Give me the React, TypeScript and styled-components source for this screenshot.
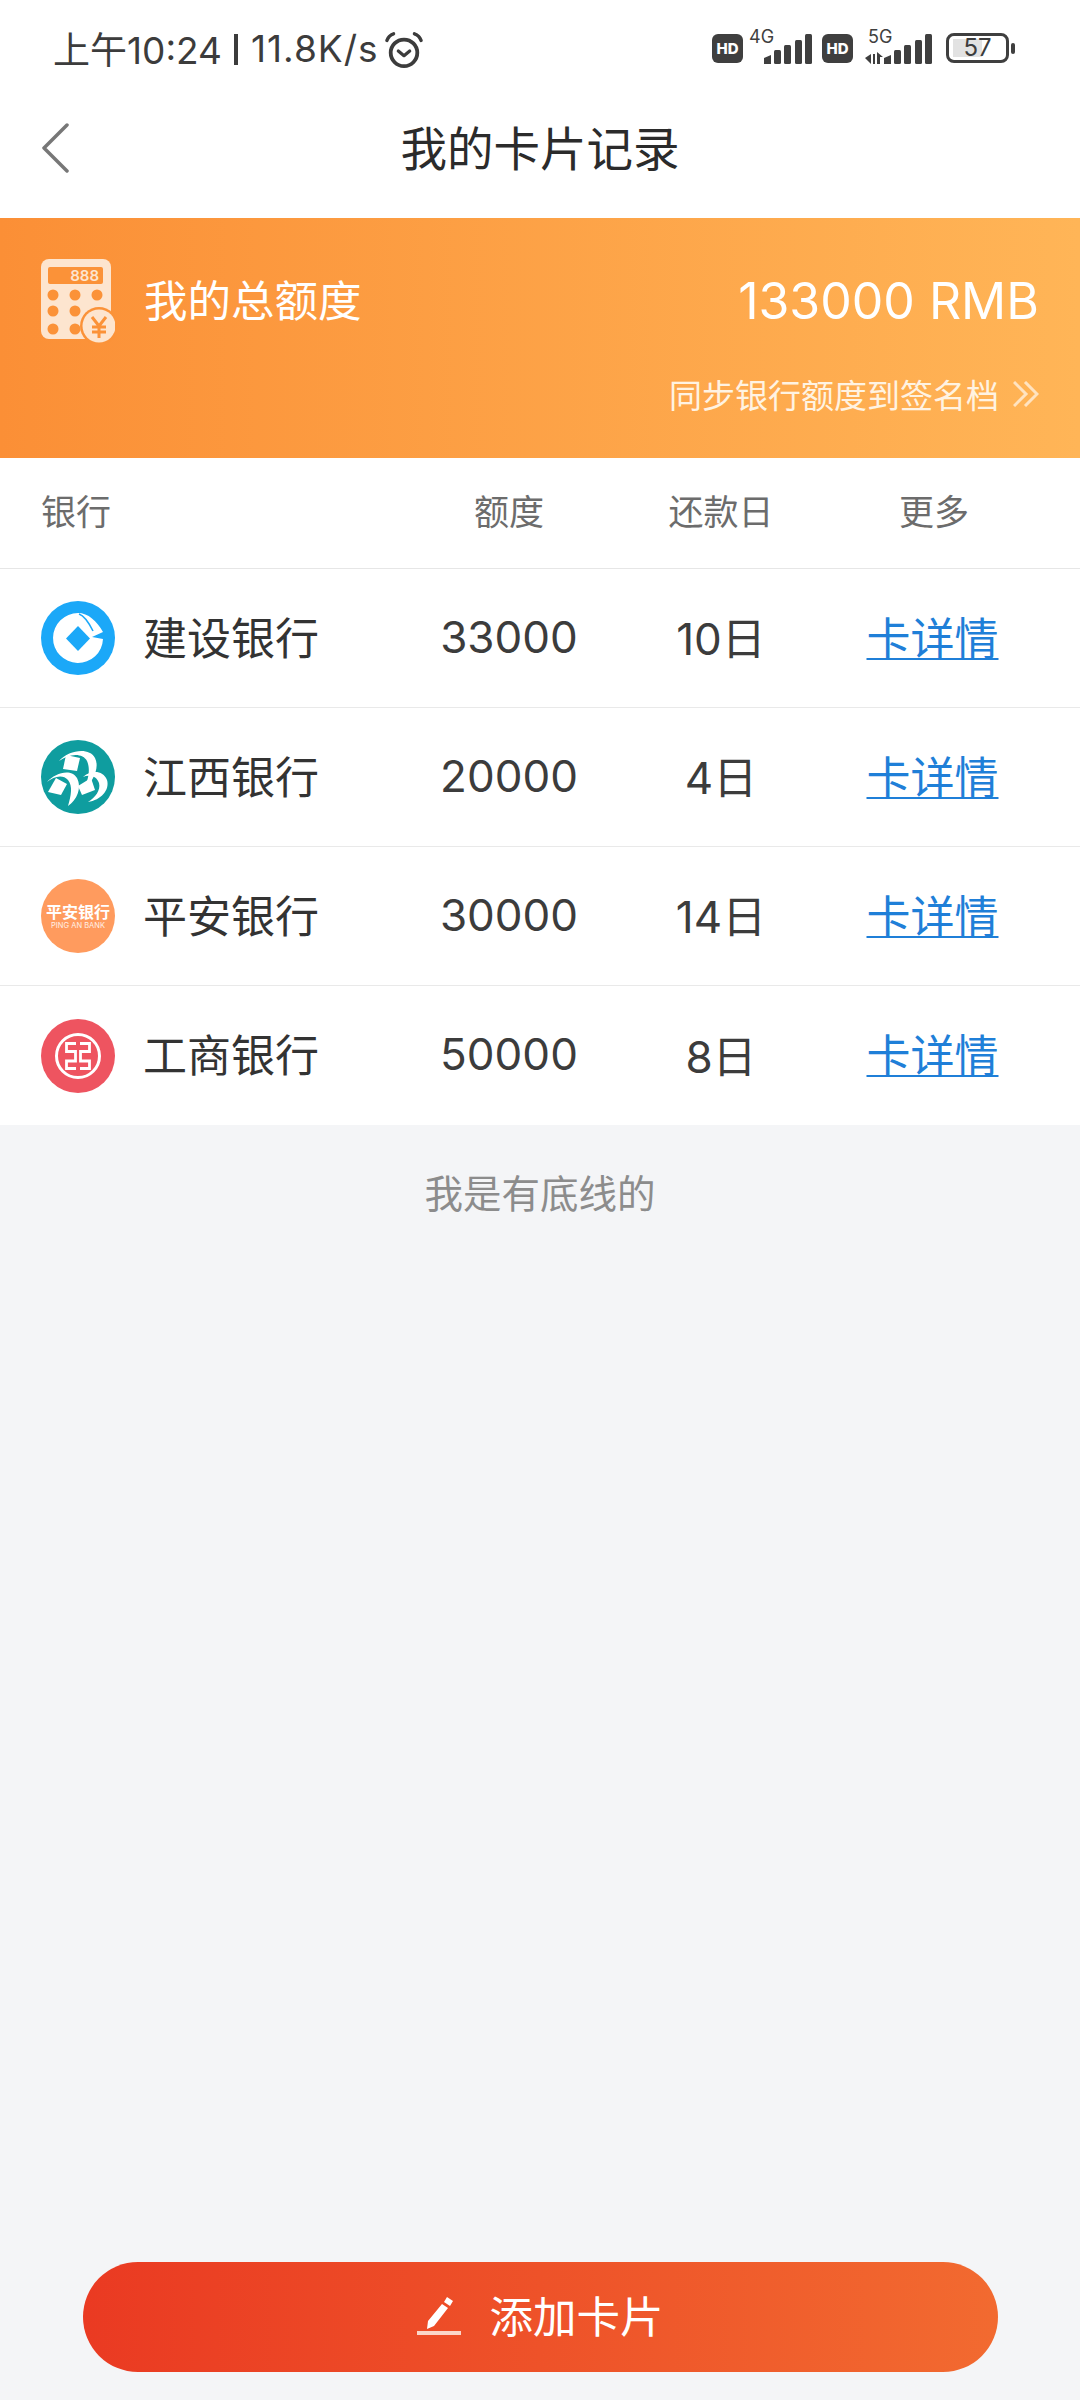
import React from 'react'
import styled, { createGlobalStyle } from 'styled-components'

const GlobalStyle = createGlobalStyle`
  html, body { margin: 0; padding: 0; background: #f4f5f7; }
  * { box-sizing: border-box; }
  body { font-family: "Inter", "Noto Sans CJK SC", sans-serif; }
`

const banks = [
  { name: '建设银行', limit: '33000', day: '10日', logo: 'ccb' },
  { name: '江西银行', limit: '20000', day: '4日', logo: 'jx' },
  { name: '平安银行', limit: '30000', day: '14日', logo: 'pa' },
  { name: '工商银行', limit: '50000', day: '8日', logo: 'icbc' },
]

const Page = styled.div`
  width: 1080px;
  height: 2400px;
  display: flex;
  flex-direction: column;
  background: #f4f5f7;
  overflow: hidden;
`

const StatusBar = styled.div`
  height: 78px;
  padding: 18px 71px 0 53px;
  background: #fff;
  display: flex;
  justify-content: space-between;
  align-items: flex-start;
`

const StatusLeft = styled.div`
  display: flex;
  align-items: center;
  height: 60px;
  font-size: 37px;
  color: #3c3c3c;
  white-space: nowrap;
`

const StatusDivider = styled.span`
  width: 4px;
  height: 31px;
  margin: 2px 13px 0 12px;
  background: #3c3c3c;
`

const NetSpeed = styled.span`
  letter-spacing: 1px;
`

const StatusRight = styled.div`
  display: flex;
  align-items: center;
  height: 60px;
`

const HdBadge = styled.div<{ $gap?: number }>`
  width: 31px;
  height: 29px;
  margin-left: ${p => p.$gap ?? 0}px;
  border-radius: 6px;
  background: #3f3f3f;
  color: #fff;
  font-size: 15px;
  font-weight: 800;
  line-height: 29px;
  text-align: center;
`

const SignalBox = styled.div<{ $width: number; $gap: number }>`
  position: relative;
  width: ${p => p.$width}px;
  height: 36px;
  margin-left: ${p => p.$gap}px;

  svg {
    display: block;
  }
`

const NetLabel = styled.span<{ $left: number }>`
  position: absolute;
  left: ${p => p.$left}px;
  top: -3px;
  font-size: 18px;
  line-height: 20px;
  color: #3f3f3f;
`

const Battery = styled.div`
  position: relative;
  width: 63px;
  height: 30px;
  margin-left: 13px;
  border: 3px solid #3f3f3f;
  border-radius: 8px;
  font-size: 24px;
  line-height: 24px;
  text-align: center;
  color: #3c3c3c;

  &::before {
    content: '';
    position: absolute;
    left: 4px;
    top: 3px;
    bottom: 3px;
    width: 29px;
    background: #e2e2e2;
    z-index: 0;
  }

  &::after {
    content: '';
    position: absolute;
    right: -9px;
    top: 7px;
    width: 4px;
    height: 11px;
    border-radius: 2px;
    background: #3f3f3f;
  }

  span {
    position: relative;
    z-index: 1;
  }
`

const Nav = styled.div`
  height: 140px;
  padding: 0 41px;
  background: #fff;
  display: grid;
  grid-template-columns: 1fr auto 1fr;
  align-items: center;
`

const Title = styled.h1`
  margin: 0 0 6px;
  font-size: 46.5px;
  font-weight: 400;
  color: #2b2b2b;
`

const Banner = styled.div`
  height: 240px;
  padding: 41px 41px 0;
  color: #fff;
  background: linear-gradient(90deg, #fb8f36 0%, #ffb557 100%);
`

const BannerTop = styled.div`
  height: 84px;
  display: flex;
  align-items: center;
`

const BannerName = styled.div`
  margin: 0 0 5px 29px;
  font-size: 43.5px;
  flex: 1;
`

const BannerAmount = styled.div`
  font-size: 50px;
  font-weight: 400;
`

const SyncRow = styled.div`
  margin-top: 29px;
  height: 44px;
  display: flex;
  justify-content: flex-end;
  align-items: center;
  gap: 14px;
  font-size: 33px;
  color: #fff3e2;
`

const Table = styled.div`
  background: #fff;
`

const TableRow = styled.div<{ $head?: boolean }>`
  display: grid;
  grid-template-columns: 364px 208px 216px 1fr;
  align-items: center;
  padding: 0 41px ${p => (p.$head ? 8 : 0)}px;
  height: ${p => (p.$head ? 111 : 139)}px;
  border-bottom: 1px solid ${p => (p.$head ? '#e6e6e6' : '#e9e9e9')};
  font-size: ${p => (p.$head ? 35 : 44)}px;
  color: ${p => (p.$head ? '#6c6c6c' : '#333')};

  &:last-child {
    border-bottom: 0;
  }
`

const BankCell = styled.div`
  display: flex;
  align-items: center;
  gap: 28px;
`

const BankName = styled.span`
  margin-bottom: 5px;
`

const Cell = styled.div`
  text-align: center;
`

const LimitCell = styled(Cell)`
  margin-bottom: 3px;
  color: #3c3c3c;
`

const DayCell = styled(Cell)`
  margin-bottom: 4px;
  color: #3c3c3c;
`

const DetailLink = styled.a`
  display: block;
  margin: 0 3px 5px 0;
  text-align: center;
  color: #1f7fd8;
  text-decoration: underline;
  text-decoration-thickness: 2px;
  text-underline-offset: 3px;
`

const Logo = styled.div<{ $bg: string }>`
  width: 74px;
  height: 74px;
  border-radius: 50%;
  flex: none;
  background: ${p => p.$bg};
  display: flex;
  flex-direction: column;
  align-items: center;
  justify-content: center;
  color: #fff;
  overflow: hidden;

  svg {
    display: block;
  }
`

const LogoName = styled.span`
  font-size: 16px;
  line-height: 18px;
  font-weight: 700;
  white-space: nowrap;
`

const LogoSub = styled.span`
  font-size: 7.5px;
  line-height: 9px;
  white-space: nowrap;
  opacity: 0.85;
`

const BottomNote = styled.div`
  padding-top: 46px;
  text-align: center;
  font-size: 38.5px;
  line-height: 46px;
  color: #8c8c8c;
`

const Spacer = styled.div`
  flex: 1;
`

const AddButton = styled.button`
  align-self: center;
  width: 915px;
  height: 110px;
  margin: 0 0 28px;
  padding: 0 0 5px;
  border: 0;
  border-radius: 55px;
  background: linear-gradient(90deg, #ea3a22 0%, #f26a30 100%);
  color: #fff;
  font-family: inherit;
  font-size: 43.5px;
  display: flex;
  align-items: center;
  justify-content: center;
  gap: 29px;
`

function AlarmIcon() {
  return (
    <svg width="40" height="38" viewBox="0 0 42 40" fill="none" stroke="#3c3c3c" strokeLinecap="round" style={{ marginLeft: 5, marginTop: 3 }}>
      <circle cx="21" cy="23" r="14" strokeWidth="4" />
      <path d="M15 21l6 5 6-5" strokeWidth="3.4" strokeLinejoin="round" />
      <path d="M3 10c1-3 4-6 7-7M39 10c-1-3-4-6-7-7" strokeWidth="3.6" />
    </svg>
  )
}

function Bars() {
  return (
    <g fill="#3f3f3f">
      <path d="M0 26l7-3v9H0z" />
      <rect x="10" y="18" width="7" height="14" rx="1.5" />
      <rect x="20" y="13" width="7" height="19" rx="1.5" />
      <rect x="31" y="8" width="7" height="24" rx="1.5" />
      <rect x="41" y="2" width="7" height="30" rx="1.5" />
    </g>
  )
}

function CalculatorIcon() {
  const dots = [
    [12, 36], [34, 36], [56, 36],
    [12, 52], [34, 52],
    [12, 70], [34, 70],
  ]
  return (
    <svg width="74" height="84" viewBox="0 0 74 84">
      <rect x="0" y="0" width="70" height="80" rx="8" fill="#fde5cf" />
      <rect x="7" y="8" width="55" height="17" rx="2" fill="#fb9238" />
      <text x="58" y="22" textAnchor="end" fontSize="15" fontWeight="600" fill="#fde5cf" fontFamily="Inter, sans-serif">888</text>
      {dots.map(([cx, cy]) => (
        <circle key={`${cx}-${cy}`} cx={cx} cy={cy} r="5.5" fill="#fb9238" />
      ))}
      <circle cx="58" cy="67" r="19" fill="#fb9238" />
      <circle cx="58" cy="67" r="16.5" fill="#fde5cf" />
      <path d="M51 58l7 9 7-9M58 67v12M51 68h14M51 73h14" stroke="#fb9238" strokeWidth="3" fill="none" />
    </svg>
  )
}

function BankLogo({ kind }: { kind: string }) {
  if (kind === 'ccb') {
    return (
      <Logo $bg="#1ba8f8">
        <svg width="74" height="74" viewBox="0 0 74 74">
          <path d="M62 38A25 25 0 1 1 37 12C47 12 56 20 62 31L51 36z" fill="#fff" />
          <path d="M37 25l12 12.5L37 50 25 37.5z" fill="#1ba8f8" />
          <path d="M38 13c6 2 10 9 14 17" stroke="#1ba8f8" strokeWidth="1.6" fill="none" />
        </svg>
      </Logo>
    )
  }
  if (kind === 'jx') {
    return (
      <Logo $bg="#0f9d9f">
        <svg width="74" height="74" viewBox="0 0 74 74" fill="#fff">
          <path d="M18 21C28 10 48 7 54 18C59 28 52 42 41 52C47 42 50 30 46 21C42 13 29 13 18 21Z" />
          <path d="M6 42C14 33 30 28 36 38C41 48 36 60 27 66C30 56 32 46 27 40C22 34 13 36 6 42Z" />
          <path d="M42 37C50 30 62 30 66 40C69 50 60 60 47 62C54 58 60 50 58 43C56 36 48 34 42 37Z" />
          <path d="M25 15L39 18L36 31L22 29Z" />
          <path d="M15 38L26 44L20 55L7 52Z" />
          <path d="M50 38L54 50L41 55L37 46Z" />
        </svg>
      </Logo>
    )
  }
  if (kind === 'pa') {
    return (
      <Logo $bg="#ff9b5e">
        <LogoName>平安银行</LogoName>
        <LogoSub>PING AN BANK</LogoSub>
      </Logo>
    )
  }
  return (
    <Logo $bg="#ee5460">
      <svg width="74" height="74" viewBox="0 0 74 74" fill="none" stroke="#fff">
        <circle cx="37" cy="37" r="21.5" strokeWidth="3" />
        <g transform="translate(37 37)" strokeWidth="2.8">
          <path d="M-2-12.5H-11.5V-4.5H-2.5V5H-11.5V12.5H-2" />
          <path d="M2-12.5H11.5V-4.5H2.5V5H11.5V12.5H2" />
        </g>
      </svg>
    </Logo>
  )
}

export default function App() {
  return (
    <Page>
      <GlobalStyle />
      <StatusBar>
        <StatusLeft>
          <span>上午10:24</span>
          <StatusDivider />
          <NetSpeed>11.8K/s</NetSpeed>
          <AlarmIcon />
        </StatusLeft>
        <StatusRight>
          <HdBadge>HD</HdBadge>
          <SignalBox $width={64} $gap={5}>
            <NetLabel $left={1}>4G</NetLabel>
            <svg width="64" height="36" viewBox="0 0 64 36">
              <g transform="translate(16 2)"><Bars /></g>
            </svg>
          </SignalBox>
          <HdBadge $gap={10}>HD</HdBadge>
          <SignalBox $width={68} $gap={12}>
            <NetLabel $left={3}>5G</NetLabel>
            <svg width="68" height="36" viewBox="0 0 68 36">
              <g fill="#3f3f3f">
                <path d="M0 28l6-4v10z" />
                <path d="M8 24h2v10H8zM12 22l6 5h-3v7h-3z" />
              </g>
              <g transform="translate(19 2)"><Bars /></g>
            </svg>
          </SignalBox>
          <Battery><span>57</span></Battery>
        </StatusRight>
      </StatusBar>

      <Nav>
        <svg width="30" height="50" viewBox="0 0 30 50" fill="none" stroke="#777" strokeWidth="3.5" strokeLinecap="round" strokeLinejoin="round">
          <path d="M26 2L3 25l23 23" />
        </svg>
        <Title>我的卡片记录</Title>
      </Nav>

      <Banner>
        <BannerTop>
          <CalculatorIcon />
          <BannerName>我的总额度</BannerName>
          <BannerAmount>133000 RMB</BannerAmount>
        </BannerTop>
        <SyncRow>
          同步银行额度到签名档
          <svg width="26" height="26" viewBox="0 0 26 26" fill="none" stroke="#ffe3c0" strokeWidth="3">
            <path d="M1 1l12 12L1 25M12 1l12 12-12 12" />
          </svg>
        </SyncRow>
      </Banner>

      <Table>
        <TableRow $head>
          <div>银行</div>
          <Cell>额度</Cell>
          <Cell>还款日</Cell>
          <Cell>更多</Cell>
        </TableRow>
        {banks.map(bank => (
          <TableRow key={bank.name}>
            <BankCell>
              <BankLogo kind={bank.logo} />
              <BankName>{bank.name}</BankName>
            </BankCell>
            <LimitCell>{bank.limit}</LimitCell>
            <DayCell>{bank.day}</DayCell>
            <DetailLink>卡详情</DetailLink>
          </TableRow>
        ))}
      </Table>

      <BottomNote>我是有底线的</BottomNote>
      <Spacer />

      <AddButton>
        <svg width="44" height="44" viewBox="0 0 44 44">
          <path d="M30 4l6 4-3 5-6-4zM25 11l6 4-14 18-7 3 1-8z" fill="#fff" />
          <rect x="0" y="38" width="44" height="4" fill="#fbd5c8" />
        </svg>
        添加卡片
      </AddButton>
    </Page>
  )
}
